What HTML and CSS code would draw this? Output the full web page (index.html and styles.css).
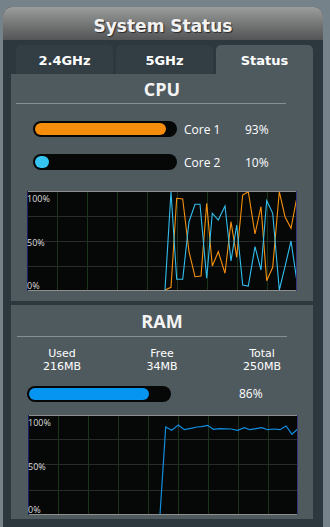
FILE: index.html
```html
<!DOCTYPE html>
<html>
<head>
<meta charset="utf-8">
<link rel="stylesheet" href="styles.css">
</head>
<body>
<div class="panel">
  <div class="header">System Status</div>
  <div class="tabs">
    <div class="tab">2.4GHz</div>
    <div class="tab">5GHz</div>
    <div class="tab active">Status</div>
  </div>

  <div class="section cpu">
    <div class="title">CPU</div>
    <div class="rule"></div>
    <div class="cores">
      <div class="core">
        <div class="bar"><div class="fill orange" style="width:93.5%"></div></div>
        <span class="name">Core 1</span>
        <span class="pct">93%</span>
      </div>
      <div class="core">
        <div class="bar"><div class="fill cyan" style="width:10%"></div></div>
        <span class="name">Core 2</span>
        <span class="pct">10%</span>
      </div>
    </div>
    <svg class="chart" width="270" height="100" viewBox="0 0 270 100">
      <rect x="0" y="0" width="270" height="100" fill="#060808"/>
      <g stroke="#1a351a" stroke-width="1">
        <line x1="30.5" y1="0" x2="30.5" y2="100"/>
        <line x1="60.5" y1="0" x2="60.5" y2="100"/>
        <line x1="90.5" y1="0" x2="90.5" y2="100"/>
        <line x1="120.5" y1="0" x2="120.5" y2="100"/>
        <line x1="150.5" y1="0" x2="150.5" y2="100"/>
        <line x1="180.5" y1="0" x2="180.5" y2="100"/>
        <line x1="210.5" y1="0" x2="210.5" y2="100"/>
        <line x1="240.5" y1="0" x2="240.5" y2="100"/>
      </g>
      <g stroke="#2a2b2b" stroke-width="1">
        <line x1="0" y1="25.5" x2="270" y2="25.5"/>
        <line x1="0" y1="50.5" x2="270" y2="50.5"/>
        <line x1="0" y1="75.5" x2="270" y2="75.5"/>
      </g>
      <polyline fill="none" stroke="#f5900f" stroke-width="1.1" points="138,99 144,96.3 149.7,7.3 155.7,8 162,60.7 168,85.7 174,85 179.7,12.3 185.3,75 191.3,60.7 198,82.3 204,30.7 209.7,66.3 215.7,4 221.3,0.7 228,43 234,15.7 239.7,89.7 245.7,76.3 252.3,0.7 258,25.7 264,37.3 269.7,7.3"/>
      <polyline fill="none" stroke="#33bdec" stroke-width="1.1" points="138,99 144,0.7 149.7,88.3 155.7,88.3 162,30.7 168,13.3 173,13.3 179.7,87.3 185.3,22.3 191.3,29 198,15 204,70 209.7,34 215.7,94 221.3,95 228,55.7 234,79 239.7,9.7 245.7,22.3 252.3,99 258,75.7 264,50 269.7,89"/>
      <line x1="0" y1="0.5" x2="270" y2="0.5" stroke="#8e9090"/>
      <line x1="0" y1="99.5" x2="270" y2="99.5" stroke="#8e9090"/>
      <line x1="0.5" y1="0" x2="0.5" y2="100" stroke="#1e1e66"/>
      <line x1="269.5" y1="0" x2="269.5" y2="100" stroke="#36367a"/>
      <g class="lbl">
        <text x="0" y="11">100%</text>
        <text x="0" y="55">50%</text>
        <text x="0" y="98">0%</text>
      </g>
    </svg>
  </div>

  <div class="section ram">
    <div class="title">RAM</div>
    <div class="rule"></div>
    <div class="stats">
      <div class="stat"><div>Used</div><div>216MB</div></div>
      <div class="stat"><div>Free</div><div>34MB</div></div>
      <div class="stat"><div>Total</div><div>250MB</div></div>
    </div>
    <div class="ramrow">
      <div class="bar"><div class="fill blue" style="width:86%"></div></div>
      <span class="rampct">86%</span>
    </div>
    <svg class="chart ramchart" width="270" height="100" viewBox="0 0 270 100">
      <rect x="0" y="0" width="270" height="100" fill="#060808"/>
      <g stroke="#1a351a" stroke-width="1">
        <line x1="30.5" y1="0" x2="30.5" y2="100"/>
        <line x1="60.5" y1="0" x2="60.5" y2="100"/>
        <line x1="90.5" y1="0" x2="90.5" y2="100"/>
        <line x1="120.5" y1="0" x2="120.5" y2="100"/>
        <line x1="150.5" y1="0" x2="150.5" y2="100"/>
        <line x1="180.5" y1="0" x2="180.5" y2="100"/>
        <line x1="210.5" y1="0" x2="210.5" y2="100"/>
        <line x1="240.5" y1="0" x2="240.5" y2="100"/>
      </g>
      <g stroke="#2a2b2b" stroke-width="1">
        <line x1="0" y1="24.5" x2="270" y2="24.5"/>
        <line x1="0" y1="49.5" x2="270" y2="49.5"/>
        <line x1="0" y1="75.5" x2="270" y2="75.5"/>
      </g>
      <polyline fill="none" stroke="#0f8ee0" stroke-width="1.2" points="132,99.5 137.7,12 143.7,15.3 150.3,10 156.3,14.7 163,13.3 168.7,12 173.7,11.7 179.7,10.3 185.3,14.3 192,13.7 203,14 209.7,15.3 216.3,12.7 222,14.7 228,13.7 233.7,12.7 239.7,14.7 246,14 252,14.7 258,11 264,19.3 269.3,14.3"/>
      <line x1="0" y1="0.5" x2="270" y2="0.5" stroke="#8e9090"/>
      <line x1="0" y1="99.5" x2="270" y2="99.5" stroke="#8e9090"/>
      <line x1="0.5" y1="0" x2="0.5" y2="100" stroke="#1e1e66"/>
      <line x1="269.5" y1="0" x2="269.5" y2="100" stroke="#36367a"/>
      <g class="lbl">
        <text x="0" y="11">100%</text>
        <text x="0" y="55">50%</text>
        <text x="0" y="98">0%</text>
      </g>
    </svg>
  </div>
</div>
</body>
</html>
```

FILE: styles.css
```css
html, body {
  margin: 0;
  padding: 0;
}
body {
  background: #75828a;
  font-family: "Open Sans", "DejaVu Sans", sans-serif;
  color: #ffffff;
  overflow: hidden;
}
.panel {
  margin: 7px 0 0 3px;
  width: 320px;
  height: 530px;
  background: #2c383e;
  border-radius: 9px 9px 0 0;
  overflow: hidden;
}
.header {
  height: 33px;
  box-sizing: border-box;
  padding-top: 6px;
  background: linear-gradient(#9b9c9c, #6f7070 60%, #535556);
  text-align: center;
  font-family: "DejaVu Sans", sans-serif;
  font-weight: bold;
  font-size: 17px;
  line-height: 26px;
  color: #f2f2f2;
  text-shadow: 1px 1px 1px #2a2a2a;
}
.tabs {
  display: flex;
  gap: 3px;
  padding: 5px 0 0 13px;
}
.tab {
  width: 97px;
  height: 29px;
  box-sizing: border-box;
  padding-top: 3px;
  background: #323e44;
  border-radius: 5px 5px 0 0;
  text-align: center;
  font-family: "DejaVu Sans", sans-serif;
  font-weight: bold;
  font-size: 13px;
  line-height: 26px;
  color: #ffffff;
}
.tab.active {
  background: #4f5a5f;
}
.section {
  margin-left: 8px;
  width: 302px;
  background: #4f5a5f;
  box-sizing: border-box;
}
.cpu {
  height: 227px;
}
.ram {
  margin-top: 4px;
  height: 214px;
}
.title {
  height: 29px;
  text-align: center;
  font-family: "Open Sans", sans-serif;
  font-weight: bold;
  font-size: 18px;
  line-height: 30px;
  color: #f4f4f4;
}
.ram .title {
  height: 31px;
  line-height: 32px;
}
.rule {
  margin-left: 5px;
  width: 270px;
  height: 1px;
  background: #858f94;
}
.ram .rule {
  margin-left: 6px;
}
.cores {
  display: flex;
  flex-direction: column;
  gap: 17px;
  padding: 17px 0 0 22px;
}
.core {
  display: flex;
  align-items: center;
  height: 16px;
  font-size: 12px;
}
.bar {
  width: 144px;
  height: 16px;
  box-sizing: border-box;
  padding: 2px;
  background: #060707;
  border-radius: 8px;
}
.fill {
  height: 12px;
  border-radius: 6px;
}
.orange { background: #f68d0c; }
.cyan { background: #36c4f3; }
.blue { background: #0695f0; }
.name {
  margin-left: 7px;
  width: 61px;
}
.chart {
  display: block;
  margin: 21px 0 0 16px;
}
.ramchart {
  margin: 13px 0 0 17px;
}
.lbl text {
  font-family: "Open Sans", sans-serif;
  font-size: 9px;
  fill: #dcdcdc;
}
.stats {
  display: flex;
  padding: 10px 0 0 1px;
  font-family: "DejaVu Sans", sans-serif;
  font-size: 11px;
  line-height: 13px;
}
.stat {
  width: 100px;
  text-align: center;
}
.ramrow {
  display: flex;
  align-items: center;
  margin: 12px 0 0 16px;
  font-size: 12px;
}
.rampct {
  margin-left: 68px;
}
```
